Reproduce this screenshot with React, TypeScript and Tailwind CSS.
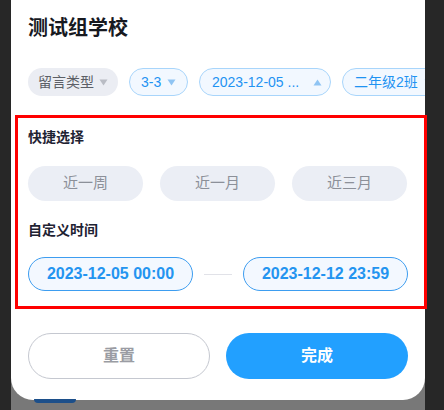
const font = "font-['Liberation_Sans','Noto_Sans_CJK_SC',sans-serif]"

function Caret({ up, className }: { up?: boolean; className: string }) {
  return (
    <svg width="9" height="7" viewBox="0 0 9 7" className={className}>
      {up ? <path d="M4.5 0.5 L8.5 6.5 L0.5 6.5 Z" fill="currentColor" /> : <path d="M0.5 0.5 L8.5 0.5 L4.5 6.5 Z" fill="currentColor" />}
    </svg>
  )
}

export default function App() {
  const quick = ['近一周', '近一月', '近三月']

  return (
    <div className={`w-[444px] h-[410px] bg-[#272727] pl-[11px] pr-[19px] overflow-hidden ${font}`}>
      <div className="w-[414px] h-[410px] bg-[#787878] flex flex-col">
        {/* Sheet */}
        <div className="h-[400px] bg-white rounded-b-[22px] flex flex-col overflow-visible">
          <h1 className="pl-[17px] pt-[15px] text-[20px] leading-[26px] font-bold text-[#17191f]">测试组学校</h1>

          {/* Filter chips */}
          <div className="mt-[27px] pl-[17px] flex gap-[11px] overflow-hidden whitespace-nowrap">
            <div className="h-[28px] w-[90px] shrink-0 rounded-full bg-[#ebedf3] flex items-center pl-[10px] gap-[5px] text-[14px] text-[#5c5f66]">
              留言类型 <Caret className="text-[#b9bcc4]" />
            </div>
            <div className="h-[28px] w-[59px] shrink-0 rounded-full bg-[#f2f8ff] border border-[#a8d5fb] flex items-center pl-[11px] gap-[6px] text-[14px] text-[#1f93f2]">
              3-3 <Caret className="text-[#8fc4f3]" />
            </div>
            <div className="h-[28px] w-[132px] shrink-0 rounded-full bg-[#f2f8ff] border border-[#a8d5fb] flex items-center pl-[12px] gap-[14px] text-[14px] text-[#1f93f2]">
              2023-12-05 ... <Caret up className="text-[#8fc4f3]" />
            </div>
            <div className="h-[28px] w-[100px] shrink-0 rounded-full bg-[#f2f8ff] border border-[#a8d5fb] flex items-center pl-[11px] gap-[6px] text-[14px] text-[#1f93f2]">
              二年级2班 <Caret className="text-[#8fc4f3]" />
            </div>
          </div>

          {/* Highlighted time range */}
          <div className="mt-[19px] ml-[4px] w-[412px] h-[194px] border-[3px] border-[#ff0000] pl-[10px] pr-[14px]">
            <h2 className="mt-[10px] text-[14px] leading-[18px] font-bold text-[#1f2333]">快捷选择</h2>
            <div className="mt-[20px] flex gap-[17px]">
              {quick.map(q => (
                <div key={q} className="w-[115px] h-[35px] rounded-full bg-[#ebeef5] flex items-center justify-center text-[15px] text-[#8c9099]">
                  {q}
                </div>
              ))}
            </div>
            <h2 className="mt-[20px] text-[14px] leading-[18px] font-bold text-[#1f2333]">自定义时间</h2>
            <div className="mt-[18px] flex items-center">
              <div className="w-[165px] h-[34px] rounded-full bg-[#f3f8ff] border border-[#3d9df0] flex items-center justify-center text-[16px] font-bold text-[#2394f0]">
                2023-12-05 00:00
              </div>
              <div className="mx-[11px] w-[28px] h-px bg-[#e1e2e8]" />
              <div className="w-[165px] h-[34px] rounded-full bg-[#f3f8ff] border border-[#3d9df0] flex items-center justify-center text-[16px] font-bold text-[#2394f0]">
                2023-12-12 23:59
              </div>
            </div>
          </div>

          {/* Actions */}
          <div className="mt-[24px] pl-[17px] flex gap-[16px]">
            <button className="w-[182px] h-[46px] rounded-full border border-[#c5c8d0] bg-white text-[16px] font-bold text-[#9a9ca3]">重置</button>
            <button className="w-[182px] h-[46px] rounded-full bg-[#22a0ff] text-[16px] font-bold text-white">完成</button>
          </div>
        </div>
        <div className="ml-[23px] w-[42px] h-[4px] -mt-[1px] rounded-b-full bg-[#1c4f8a]" />
      </div>
    </div>
  )
}
